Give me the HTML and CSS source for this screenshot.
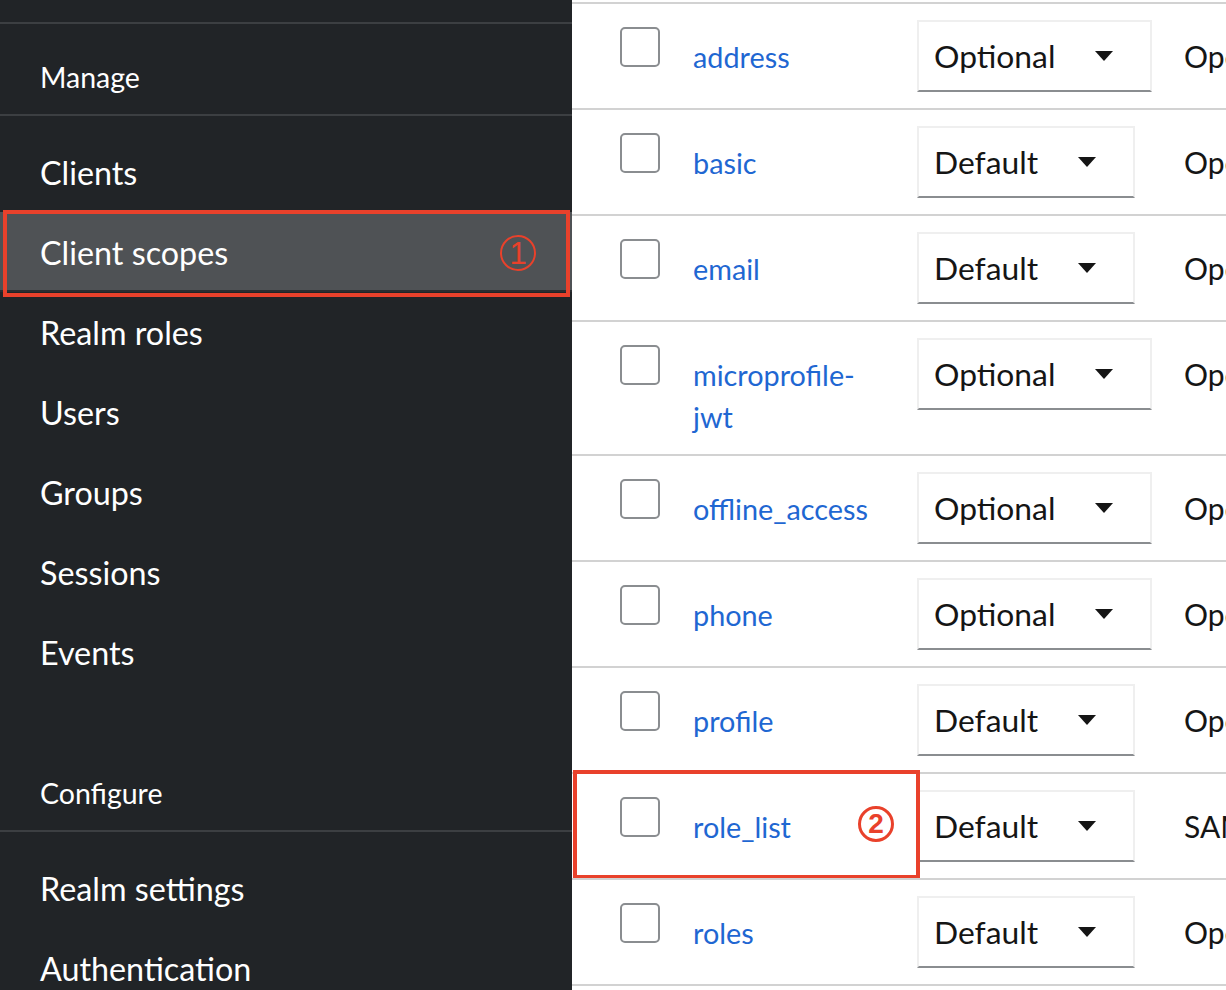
FILE: index.html
```html
<!DOCTYPE html>
<html lang="en">
<head>
<meta charset="utf-8">
<title>Client scopes</title>
<link rel="stylesheet" href="styles.css">
</head>
<body>
<div class="page">
  <aside class="sidebar">
    <div class="top-stub"></div>
    <div class="section-title">Manage</div>
    <ul class="nav-list">
      <li class="nav-item">Clients</li>
      <li class="nav-item active">Client scopes<span class="mark mark-one">1</span><span class="annot annot-one"></span></li>
      <li class="nav-item">Realm roles</li>
      <li class="nav-item">Users</li>
      <li class="nav-item">Groups</li>
      <li class="nav-item">Sessions</li>
      <li class="nav-item">Events</li>
    </ul>
    <div class="section-title section-gap">Configure</div>
    <ul class="nav-list">
      <li class="nav-item">Realm settings</li>
      <li class="nav-item">Authentication</li>
    </ul>
  </aside>

  <main class="main">
    <div class="row">
      <div class="check-cell"><span class="checkbox"></span></div>
      <div class="name-cell"><a class="link">address</a></div>
      <div class="select-cell"><div class="select"><span>Optional</span><span class="caret"></span></div></div>
      <div class="type-cell">OpenID Connect</div>
    </div>
    <div class="row">
      <div class="check-cell"><span class="checkbox"></span></div>
      <div class="name-cell"><a class="link">basic</a></div>
      <div class="select-cell"><div class="select"><span>Default</span><span class="caret"></span></div></div>
      <div class="type-cell">OpenID Connect</div>
    </div>
    <div class="row">
      <div class="check-cell"><span class="checkbox"></span></div>
      <div class="name-cell"><a class="link">email</a></div>
      <div class="select-cell"><div class="select"><span>Default</span><span class="caret"></span></div></div>
      <div class="type-cell">OpenID Connect</div>
    </div>
    <div class="row">
      <div class="check-cell"><span class="checkbox"></span></div>
      <div class="name-cell"><a class="link">microprofile-jwt</a></div>
      <div class="select-cell"><div class="select"><span>Optional</span><span class="caret"></span></div></div>
      <div class="type-cell">OpenID Connect</div>
    </div>
    <div class="row">
      <div class="check-cell"><span class="checkbox"></span></div>
      <div class="name-cell"><a class="link">offline_access</a></div>
      <div class="select-cell"><div class="select"><span>Optional</span><span class="caret"></span></div></div>
      <div class="type-cell">OpenID Connect</div>
    </div>
    <div class="row">
      <div class="check-cell"><span class="checkbox"></span></div>
      <div class="name-cell"><a class="link">phone</a></div>
      <div class="select-cell"><div class="select"><span>Optional</span><span class="caret"></span></div></div>
      <div class="type-cell">OpenID Connect</div>
    </div>
    <div class="row">
      <div class="check-cell"><span class="checkbox"></span></div>
      <div class="name-cell"><a class="link">profile</a></div>
      <div class="select-cell"><div class="select"><span>Default</span><span class="caret"></span></div></div>
      <div class="type-cell">OpenID Connect</div>
    </div>
    <div class="row">
      <div class="check-cell"><span class="checkbox"></span></div>
      <div class="name-cell"><a class="link">role_list</a></div>
      <div class="select-cell"><div class="select"><span>Default</span><span class="caret"></span></div></div>
      <div class="type-cell">SAML</div>
      <span class="annot annot-two"></span>
      <span class="mark mark-two">2</span>
    </div>
    <div class="row row-last">
      <div class="check-cell"><span class="checkbox"></span></div>
      <div class="name-cell"><a class="link">roles</a></div>
      <div class="select-cell"><div class="select"><span>Default</span><span class="caret"></span></div></div>
      <div class="type-cell">OpenID Connect</div>
    </div>
  </main>
</div>
</body>
</html>
```

FILE: styles.css
```css
* { box-sizing: border-box; }

html, body {
  margin: 0;
  padding: 0;
  width: 1226px;
  height: 990px;
  overflow: hidden;
  background: #ffffff;
  font-family: Lato, "Open Sans", "Liberation Sans", sans-serif;
}

.page {
  display: flex;
  width: 1226px;
  height: 990px;
  overflow: hidden;
}

/* Sidebar */
.sidebar {
  flex: 0 0 572px;
  width: 572px;
  height: 990px;
  background: #212427;
  color: #ffffff;
  overflow: hidden;
}

.top-stub {
  height: 24px;
  border-bottom: 2px solid #3c3f42;
}

.section-title {
  padding: 33px 40px 17px;
  font-size: 28.5px;
  line-height: 40px;
  border-bottom: 2px solid #3c3f42;
  height: 92px;
}

.section-gap {
  margin-top: 32px;
}

.nav-list {
  list-style: none;
  margin: 0;
  padding: 16px 0;
}

.nav-item {
  position: relative;
  display: flex;
  align-items: center;
  height: 80px;
  padding-left: 40px;
  font-size: 32.3px;
  color: #ffffff;
}

.nav-item.active {
  background: #4f5255;
  box-shadow: inset 0 -2px 0 #2b2e31;
}

.mark {
  position: absolute;
  display: flex;
  align-items: center;
  justify-content: center;
  width: 36px;
  height: 36px;
  border-radius: 50%;
  color: #e9412b;
  font-family: "Liberation Sans", Arial, sans-serif;
  line-height: 1;
}

.mark-one {
  right: 36px;
  top: 23px;
  border: 2px solid #e9412b;
  font-size: 31px;
  padding-top: 1px;
}

.mark-two {
  left: 286px;
  top: 32px;
  border: 3px solid #e9412b;
  font-size: 28px;
  font-weight: 700;
}

.annot {
  position: absolute;
  border: 4px solid #e9412b;
  pointer-events: none;
}

.annot-one {
  top: -2px;
  left: 3px;
  right: 2px;
  bottom: -5px;
}

.annot-two {
  top: -4px;
  left: 1px;
  width: 347px;
  height: 109px;
}

/* Main table */
.main {
  flex: 1 1 auto;
  padding-top: 2px;
  overflow: hidden;
  background: #ffffff;
}

.row {
  position: relative;
  display: flex;
  align-items: flex-start;
  border-top: 2px solid #d2d2d2;
  padding: 16px 0 16px 48px;
  white-space: nowrap;
}

.row-last {
  border-bottom: 2px solid #d2d2d2;
}

.check-cell {
  flex: 0 0 40px;
  margin-top: 7px;
}

.checkbox {
  display: block;
  width: 40px;
  height: 40px;
  border: 2px solid #8a8d90;
  border-radius: 5px;
  background: #ffffff;
}

.name-cell {
  flex: 0 0 200px;
  margin-left: 33px;
  margin-top: 16px;
  font-size: 28.8px;
  line-height: 42px;
  white-space: normal;
}

.link {
  color: #1f67d2;
  text-decoration: none;
}

.select-cell {
  flex: 0 0 267px;
  margin-left: 24px;
}

.select {
  display: inline-flex;
  align-items: center;
  gap: 40px;
  height: 72px;
  padding: 0 37px 0 15px;
  border: 2px solid #efefef;
  border-bottom: 2px solid #8a8d90;
  font-size: 31.8px;
  color: #151515;
}

.caret {
  width: 0;
  height: 0;
  border-left: 9px solid transparent;
  border-right: 9px solid transparent;
  border-top: 10px solid #151515;
}

.type-cell {
  flex: 0 0 auto;
  font-size: 30px;
  line-height: 72px;
  color: #151515;
}
```
